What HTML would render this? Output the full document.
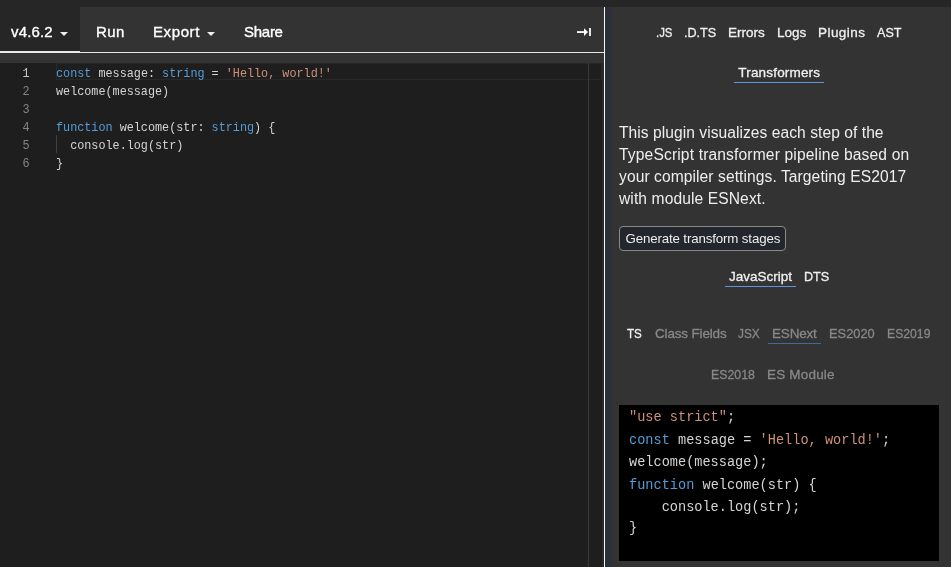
<!DOCTYPE html>
<html><head><meta charset="utf-8">
<style>
*{margin:0;padding:0;box-sizing:border-box}
html,body{width:951px;height:567px;overflow:hidden;background:#262626;font-family:"Liberation Sans",sans-serif;position:relative}
.abs{position:absolute}
#hdr{left:80px;top:7px;width:524px;height:45px;background:#333}
#verbg{left:0;top:0;width:80px;height:52px;background:#262626}
#hline{left:0;top:52px;width:604px;height:1px;background:#e8e8e8}
#vline2{left:0;top:51px;width:80px;height:2px;background:#e8e8e8}
#band{left:0;top:53px;width:604px;height:10px;background:#333}
#editor{left:0;top:63px;width:604px;height:504px;background:#1e1e1e}
#vline{left:604px;top:7px;width:1px;height:560px;background:#f8f8f8}
#strip{left:605px;top:7px;width:6px;height:560px;background:#2a2f38}
#side{left:611px;top:7px;width:340px;height:560px;background:#333}
.nav{color:#fff;font-size:15px;top:23px;white-space:nowrap;-webkit-text-stroke:0.35px #fff}
.tri{width:0;height:0;border-left:4px solid transparent;border-right:4px solid transparent;border-top:4px solid #eee}
.code{font-family:"Liberation Mono",monospace;font-size:13.5px;transform-origin:0 0;color:#d4d4d4;white-space:pre;line-height:18px}
.ln{color:#858585;text-align:right;width:30px}
.kw{color:#569cd6}
.str{color:#ce9178}
.tab{color:#f0f0f0;font-size:13.5px;white-space:nowrap;-webkit-text-stroke:0.3px currentColor}
.gray{color:#888}
.para{left:619px;color:#eee;font-size:15.6px;line-height:22.2px;white-space:nowrap}
.ul{height:1.6px;background:#5f95de}
</style></head><body><div id="root" style="position:absolute;left:0;top:0;width:951px;height:567px;will-change:transform">
<div class="abs" id="verbg"></div>
<div class="abs" id="hdr"></div>
<div class="abs" id="vline2"></div>
<div class="abs" id="hline"></div>
<div class="abs" id="band"></div>
<div class="abs" id="editor"></div>
<div class="abs" style="left:602px;top:63px;width:2px;height:504px;background:#282828"></div>
<div class="abs" id="vline"></div>
<div class="abs" id="strip"></div>
<div class="abs" id="side"></div>

<!-- header -->
<div id="ver" class="abs nav" style="left:11px;top:23.4px;letter-spacing:0.16px">v4.6.2</div>
<div class="abs tri" style="left:60px;top:32px"></div>
<div id="run" class="abs nav" style="left:96px;top:23.4px;letter-spacing:0.4px">Run</div>
<div id="exp" class="abs nav" style="left:153px;top:23.4px;letter-spacing:0.6px">Export</div>
<div class="abs tri" style="left:207px;top:32px"></div>
<div id="shr" class="abs nav" style="left:244px;top:23.4px;letter-spacing:-0.27px">Share</div>
<svg class="abs" style="left:570px;top:22px" width="28" height="20" viewBox="570 22 28 20"><rect x="577" y="31.1" width="8" height="1.9" fill="#f4f4f4"/><path d="M584 28.2 L588 32.1 L584 36 Z" fill="#fff"/><rect x="589" y="28" width="2" height="8" fill="#e8e8e8"/></svg>

<!-- editor -->
<div class="abs" style="left:56px;top:63px;width:546px;height:17px;border:1px solid #282828"></div>
<div class="abs" style="left:588px;top:63px;width:1px;height:504px;background:#383838"></div>
<div class="abs code ln" style="left:0;top:65px;width:34px;transform:scaleX(0.873)"><span style="color:#c6c6c6">1</span>
2
3
4
5
6</div>
<div class="abs" style="left:56px;top:135px;width:1px;height:18px;background:#404040"></div>
<div class="abs code" style="left:56px;top:65px;transform:scaleX(0.873)"><span class="kw">const</span> message: <span class="kw">string</span> = <span class="str">'Hello, world!'</span>
welcome(message)

<span class="kw">function</span> welcome(str: <span class="kw">string</span>) {
  console.log(str)
}</div>

<!-- sidebar -->
<div id="js" class="abs tab" style="left:656px;top:25px;transform:scaleX(0.844);transform-origin:0 0">.JS</div>
<div id="dts" class="abs tab" style="left:684px;top:25px;transform:scaleX(0.933);transform-origin:0 0">.D.TS</div>
<div id="err" class="abs tab" style="left:728px;top:25px">Errors</div>
<div id="logs" class="abs tab" style="left:777px;top:25px">Logs</div>
<div id="plg" class="abs tab" style="left:818px;top:25px;letter-spacing:0.45px">Plugins</div>
<div id="ast" class="abs tab" style="left:877px;top:25px;transform:scaleX(0.931);transform-origin:0 0">AST</div>
<div id="trf" class="abs tab" style="left:738.3px;top:65px;letter-spacing:0.18px">Transformers</div>
<div class="abs ul" style="left:734px;top:81.8px;width:90px"></div>

<div class="abs para" style="top:121.5px;letter-spacing:0.05px">This plugin visualizes each step of the</div>
<div class="abs para" style="top:143.7px;letter-spacing:0.15px">TypeScript transformer pipeline based on</div>
<div class="abs para" style="top:165.9px;letter-spacing:0.08px">your compiler settings. Targeting ES2017</div>
<div class="abs para" style="top:188.1px;letter-spacing:0.1px">with module ESNext.</div>

<div class="abs" style="left:619px;top:226px;width:167px;height:25px;border:1px solid #8a8a8a;border-radius:4px;background:#23262d"></div>
<div id="gen" class="abs" style="left:625.5px;top:231px;color:#eee;font-size:13.3px;letter-spacing:-0.14px;white-space:nowrap">Generate transform stages</div>

<div id="jsc" class="abs tab" style="left:729px;top:268.5px">JavaScript</div>
<div class="abs ul" style="left:725px;top:285.6px;width:71px"></div>
<div id="dts2" class="abs tab" style="left:804px;top:268.5px;transform:scaleX(0.935);transform-origin:0 0">DTS</div>

<div id="ts" class="abs tab" style="left:627px;top:326px;transform:scaleX(0.859);transform-origin:0 0">TS</div>
<div id="cf" class="abs tab gray" style="left:655px;top:326px;letter-spacing:-0.17px">Class Fields</div>
<div id="jsx" class="abs tab gray" style="left:738px;top:326px;transform:scaleX(0.879);transform-origin:0 0">JSX</div>
<div id="esn" class="abs tab gray" style="left:772px;top:326px;letter-spacing:-0.18px">ESNext</div>
<div class="abs ul" style="left:768px;top:343px;width:53px;height:1.2px;background:#3d6c98"></div>
<div id="e20" class="abs tab gray" style="left:829px;top:326px;transform:scaleX(0.951);transform-origin:0 0">ES2020</div>
<div id="e19" class="abs tab gray" style="left:887px;top:326px;transform:scaleX(0.904);transform-origin:0 0">ES2019</div>
<div id="e18" class="abs tab gray" style="left:711px;top:367px;transform:scaleX(0.913);transform-origin:0 0">ES2018</div>
<div id="esm" class="abs tab gray" style="left:767px;top:367px;letter-spacing:0.19px">ES Module</div>

<div class="abs" style="left:619px;top:405px;width:320px;height:156px;background:#000"></div>
<div class="abs code" style="left:628.5px;top:406px;font-size:14.5px;line-height:22.6px;color:#d4d4d4;transform:scaleX(0.938)"><span class="str">"use strict"</span>;
<span class="kw">const</span> message = <span class="str">'Hello, world!'</span>;
welcome(message);
<span class="kw">function</span> welcome(str) {
    console.log(str);
<span style="position:relative;top:-2px">}</span></div>
</div></body></html>
